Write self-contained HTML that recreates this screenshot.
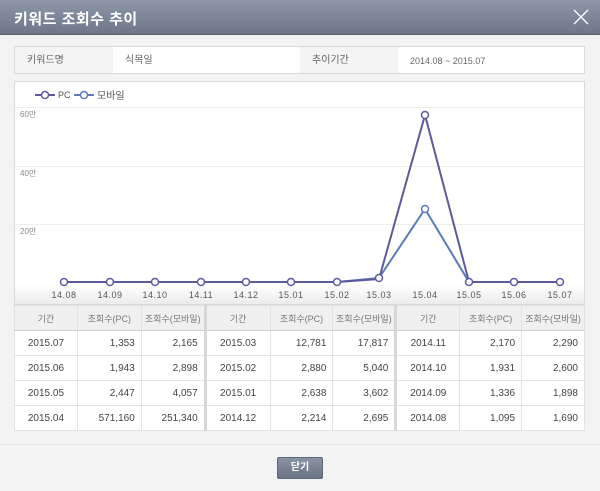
<!DOCTYPE html>
<html><head><meta charset="utf-8"><style>
*{margin:0;padding:0;box-sizing:border-box}
body{width:600px;height:491px;overflow:hidden;background:#f3f3f3;font-family:"Liberation Sans","Noto Sans CJK KR",sans-serif;position:relative;color:#444}
.hdr{position:absolute;left:0;top:0;width:600px;height:35px;background:linear-gradient(#8e97a8,#6e778a);border-bottom:1px solid #5a6273}
.hdr .t{position:absolute;left:14px;top:8px;color:#fff;font-size:15px;font-weight:bold;letter-spacing:0.5px}
.hdr .x{position:absolute;right:10px;top:8px;width:18px;height:18px}
.info{position:absolute;left:14px;top:46px;width:571px;height:28px;border:1px solid #d8d8d8;background:#fff;font-size:10px}
.info div{position:absolute;top:0;height:26px;line-height:28px;padding-left:12px}
.chart{position:absolute;left:14px;top:81px;width:571px;height:224px;border:1px solid #d8d8d8;background:#fff}
table{position:absolute;left:14px;top:305px;width:571px;border-collapse:collapse;font-size:10px;background:#fff}
td{border:1px solid #e2e2e2;height:25px;text-align:right;padding-right:6px;color:#444}
td.c{text-align:center;padding:0}
tr.h td{background:#f0f0f0;text-align:center;padding:0;color:#777;font-size:9px;border-bottom:1px solid #d0d0d0}
td.s{border-left:3px solid #d8d8d8}
.sep{position:absolute;left:0;top:444px;width:600px;height:1px;background:#e4e4e4}
.btn{position:absolute;left:277px;top:457px;width:46px;height:22px;background:linear-gradient(#8a93a3,#6a7385);border:1px solid #5e6677;color:#fff;font-size:10px;font-weight:bold;text-align:center;line-height:20px;border-radius:2px}
</style></head><body>
<div class="hdr"><div class="t">키워드 조회수 추이</div>
<svg class="x" viewBox="0 0 18 18"><path d="M2 2L16 16M16 2L2 16" stroke="#fff" stroke-width="1.3"/></svg></div>
<div class="info">
<div style="left:0;width:98px;background:#f4f4f4;color:#666">키워드명</div>
<div style="left:98px;width:187px;color:#666">식목일</div>
<div style="left:285px;width:98px;background:#f4f4f4;color:#666">추이기간</div>
<div style="left:383px;font-size:9px;color:#666">2014.08 ~ 2015.07</div>
</div>
<div class="chart"></div>
<svg style="position:absolute;left:0;top:0" width="600" height="305" font-family="Liberation Sans, Noto Sans CJK KR, sans-serif">
<defs><linearGradient id="g" x1="0" y1="0" x2="0" y2="1"><stop offset="0" stop-color="#fff"/><stop offset="1" stop-color="#ececec"/></linearGradient></defs>
<rect x="15" y="284" width="569" height="20" fill="url(#g)"/>
<g stroke="#eeeeee" stroke-width="1"><line x1="15" y1="107.5" x2="584" y2="107.5"/><line x1="15" y1="166.5" x2="584" y2="166.5"/><line x1="15" y1="224.5" x2="584" y2="224.5"/></g>
<g font-size="8" fill="#888"><text x="20" y="117">60만</text><text x="20" y="176">40만</text><text x="20" y="234">20만</text></g>
<g stroke-width="2" fill="none"><line x1="35" y1="95" x2="55" y2="95" stroke="#5d5a9e"/><circle cx="45" cy="95" r="3.5" fill="#fff" stroke="#5d5a9e" stroke-width="1.5"/>
<line x1="74" y1="95" x2="94" y2="95" stroke="#5a7cb5"/><circle cx="84" cy="95" r="3.5" fill="#fff" stroke="#5a7cb5" stroke-width="1.5"/></g>
<text x="58" y="98" font-size="9" fill="#555">PC</text><text x="97" y="99" font-size="10" fill="#555">모바일</text>
<polyline fill="none" stroke="#5a7cb5" stroke-width="2" points="64,282 110,282 155,282 201,282 246,282 291,282 337,282 379,278 425,209 469,282 514,282 560,282"/>
<polyline fill="none" stroke="#5d5a9e" stroke-width="2" points="64,282 110,282 155,282 201,282 246,282 291,282 337,282 379,279 425,115 469,282 514,282 560,282"/>
<g fill="#fff" stroke="#5d5a9e" stroke-width="1.5">
<circle cx="64" cy="282" r="3.5"/><circle cx="110" cy="282" r="3.5"/><circle cx="155" cy="282" r="3.5"/><circle cx="201" cy="282" r="3.5"/><circle cx="246" cy="282" r="3.5"/><circle cx="291" cy="282" r="3.5"/><circle cx="337" cy="282" r="3.5"/><circle cx="379" cy="278" r="3.5"/><circle cx="425" cy="115" r="3.5"/><circle cx="469" cy="282" r="3.5"/><circle cx="514" cy="282" r="3.5"/><circle cx="560" cy="282" r="3.5"/>
<circle cx="425" cy="209" r="3.5" stroke="#5a7cb5"/></g>
<g font-size="9" fill="#555" text-anchor="middle" letter-spacing="0.5">
<text x="64" y="298">14.08</text><text x="110" y="298">14.09</text><text x="155" y="298">14.10</text><text x="201" y="298">14.11</text><text x="246" y="298">14.12</text><text x="291" y="298">15.01</text><text x="337" y="298">15.02</text><text x="379" y="298">15.03</text><text x="425" y="298">15.04</text><text x="469" y="298">15.05</text><text x="514" y="298">15.06</text><text x="560" y="298">15.07</text></g>
</svg>
<table>
<colgroup><col style="width:63px"><col style="width:64px"><col style="width:64px"><col style="width:65px"><col style="width:63px"><col style="width:63px"><col style="width:64px"><col style="width:62px"><col style="width:63px"></colgroup>
<tr class="h"><td>기간</td><td>조회수(PC)</td><td>조회수(모바일)</td><td class="s">기간</td><td>조회수(PC)</td><td>조회수(모바일)</td><td class="s">기간</td><td>조회수(PC)</td><td>조회수(모바일)</td></tr>
<tr><td class="c">2015.07</td><td>1,353</td><td>2,165</td><td class="c s">2015.03</td><td>12,781</td><td>17,817</td><td class="c s">2014.11</td><td>2,170</td><td>2,290</td></tr>
<tr><td class="c">2015.06</td><td>1,943</td><td>2,898</td><td class="c s">2015.02</td><td>2,880</td><td>5,040</td><td class="c s">2014.10</td><td>1,931</td><td>2,600</td></tr>
<tr><td class="c">2015.05</td><td>2,447</td><td>4,057</td><td class="c s">2015.01</td><td>2,638</td><td>3,602</td><td class="c s">2014.09</td><td>1,336</td><td>1,898</td></tr>
<tr><td class="c">2015.04</td><td>571,160</td><td>251,340</td><td class="c s">2014.12</td><td>2,214</td><td>2,695</td><td class="c s">2014.08</td><td>1,095</td><td>1,690</td></tr>
</table>
<div class="sep"></div>
<div class="btn">닫기</div>
</body></html>
